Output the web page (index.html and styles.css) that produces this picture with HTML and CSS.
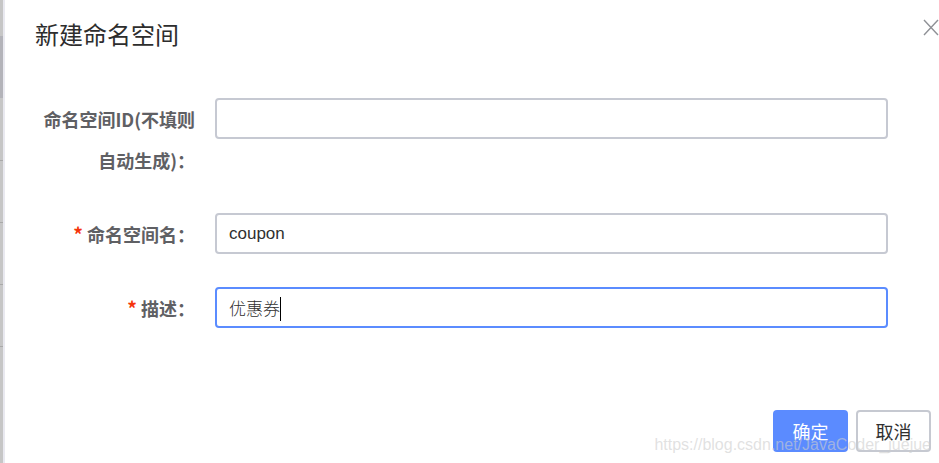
FILE: index.html
```html
<!DOCTYPE HTML>
<html>
<head>
	<title>新建命名空间</title>
	<meta charset="utf-8" />
	<link rel="stylesheet" href="styles.css">
</head>
<body>
<div class="side"></div>
<div class="dialog">
	<div class="head">
		<h2>新建命名空间</h2>
		<svg class="close" width="16" height="17" viewBox="0 0 16 17">
			<path d="M1 1L15 16M15 1L1 16" stroke="#8f9196" stroke-width="1.4" fill="none" />
		</svg>
	</div>
	<div class="form">
		<div class="row first">
			<div class="label">命名空间ID(不填则<br />自动生成)：</div>
			<div class="field"></div>
		</div>
		<div class="row">
			<div class="label"><span class="req">*</span> 命名空间名：</div>
			<div class="field">coupon</div>
		</div>
		<div class="row">
			<div class="label"><span class="req">*</span> 描述：</div>
			<div class="field focus">优惠券<span class="caret"></span></div>
		</div>
	</div>
	<div class="foot">
		<button class="ok">确定</button>
		<button class="cancel">取消</button>
	</div>
	<div class="mark">https://blog.csdn.net/JavaCoder_juejue</div>
</div>
</body>
</html>
```

FILE: styles.css
```css
body{
	font-family: "Liberation Sans", "Noto Sans CJK SC", sans-serif;
	margin: 0px;
	padding: 0px;
	display: flex;
	height: 463px;
	overflow: hidden;
	background: #fff;
}
.side{
	width: 3px;
	border-right: 2px solid #e9e9f0;
	background: linear-gradient(to bottom, #c6c6c6 0px, #c6c6c6 36px, #b3b3b9 36px, #b3b3b9 98px, #c6c6c6 98px, #c6c6c6 160px, #a9a9a9 160px, #a9a9a9 161px, #c6c6c6 161px, #c6c6c6 222px, #a9a9a9 222px, #a9a9a9 223px, #c6c6c6 223px, #c6c6c6 284px, #a9a9a9 284px, #a9a9a9 285px, #c6c6c6 285px, #c6c6c6 346px, #a9a9a9 346px, #a9a9a9 347px, #c6c6c6 347px);
}
.dialog{
	flex: 1;
	position: relative;
	padding: 21px 8px 0px 0px;
}
.head{
	display: flex;
	justify-content: space-between;
	align-items: flex-start;
	padding-left: 30px;
}
h2{
	margin: 0px;
	font-family: "Noto Sans CJK SC", sans-serif;
	font-size: 24px;
	line-height: 26px;
	font-weight: normal;
	color: #2d2d2d;
}
.close{
	margin-top: -2px;
	margin-right: -8px;
}
.form{
	margin-top: 51px;
}
.row{
	display: flex;
	align-items: flex-start;
	margin-bottom: 32px;
}
.label{
	width: 190px;
	padding-right: 20px;
	text-align: right;
	font-family: "Noto Sans CJK SC", sans-serif;
	font-size: 18px;
	font-weight: bold;
	line-height: 41px;
	color: #5f6064;
}
.first .label{
	margin-top: 1px;
}
.first{
	margin-bottom: 32px;
}
.req{
	color: #f5340b;
	font-size: 19px;
}
.field{
	width: 645px;
	height: 37px;
	border: 2px solid #c6c9d2;
	border-radius: 4px;
	padding: 0px 12px;
	font-size: 17px;
	line-height: 37px;
	color: #303030;
}
.field.focus{
	border-color: #5b8cff;
	font-family: "Noto Sans CJK SC", sans-serif;
	font-weight: 300;
}
.caret{
	display: inline-block;
	width: 1px;
	height: 24px;
	background: #000;
	vertical-align: middle;
	margin-top: -3px;
}
.foot{
	display: flex;
	justify-content: flex-end;
	gap: 8px;
	margin-top: 81px;
}
button{
	width: 75px;
	height: 42px;
	border-radius: 4px;
	font-family: "Noto Sans CJK SC", sans-serif;
	font-size: 18px;
	padding: 0px;
}
.ok{
	background: #5b8bff;
	border: none;
	color: #fff;
}
.cancel{
	background: #fff;
	border: 2px solid #c6c9d1;
	color: #303030;
}
.mark{
	position: absolute;
	right: 8px;
	top: 436px;
	font-size: 16px;
	color: rgba(205,205,205,.6);
	white-space: nowrap;
}
```
